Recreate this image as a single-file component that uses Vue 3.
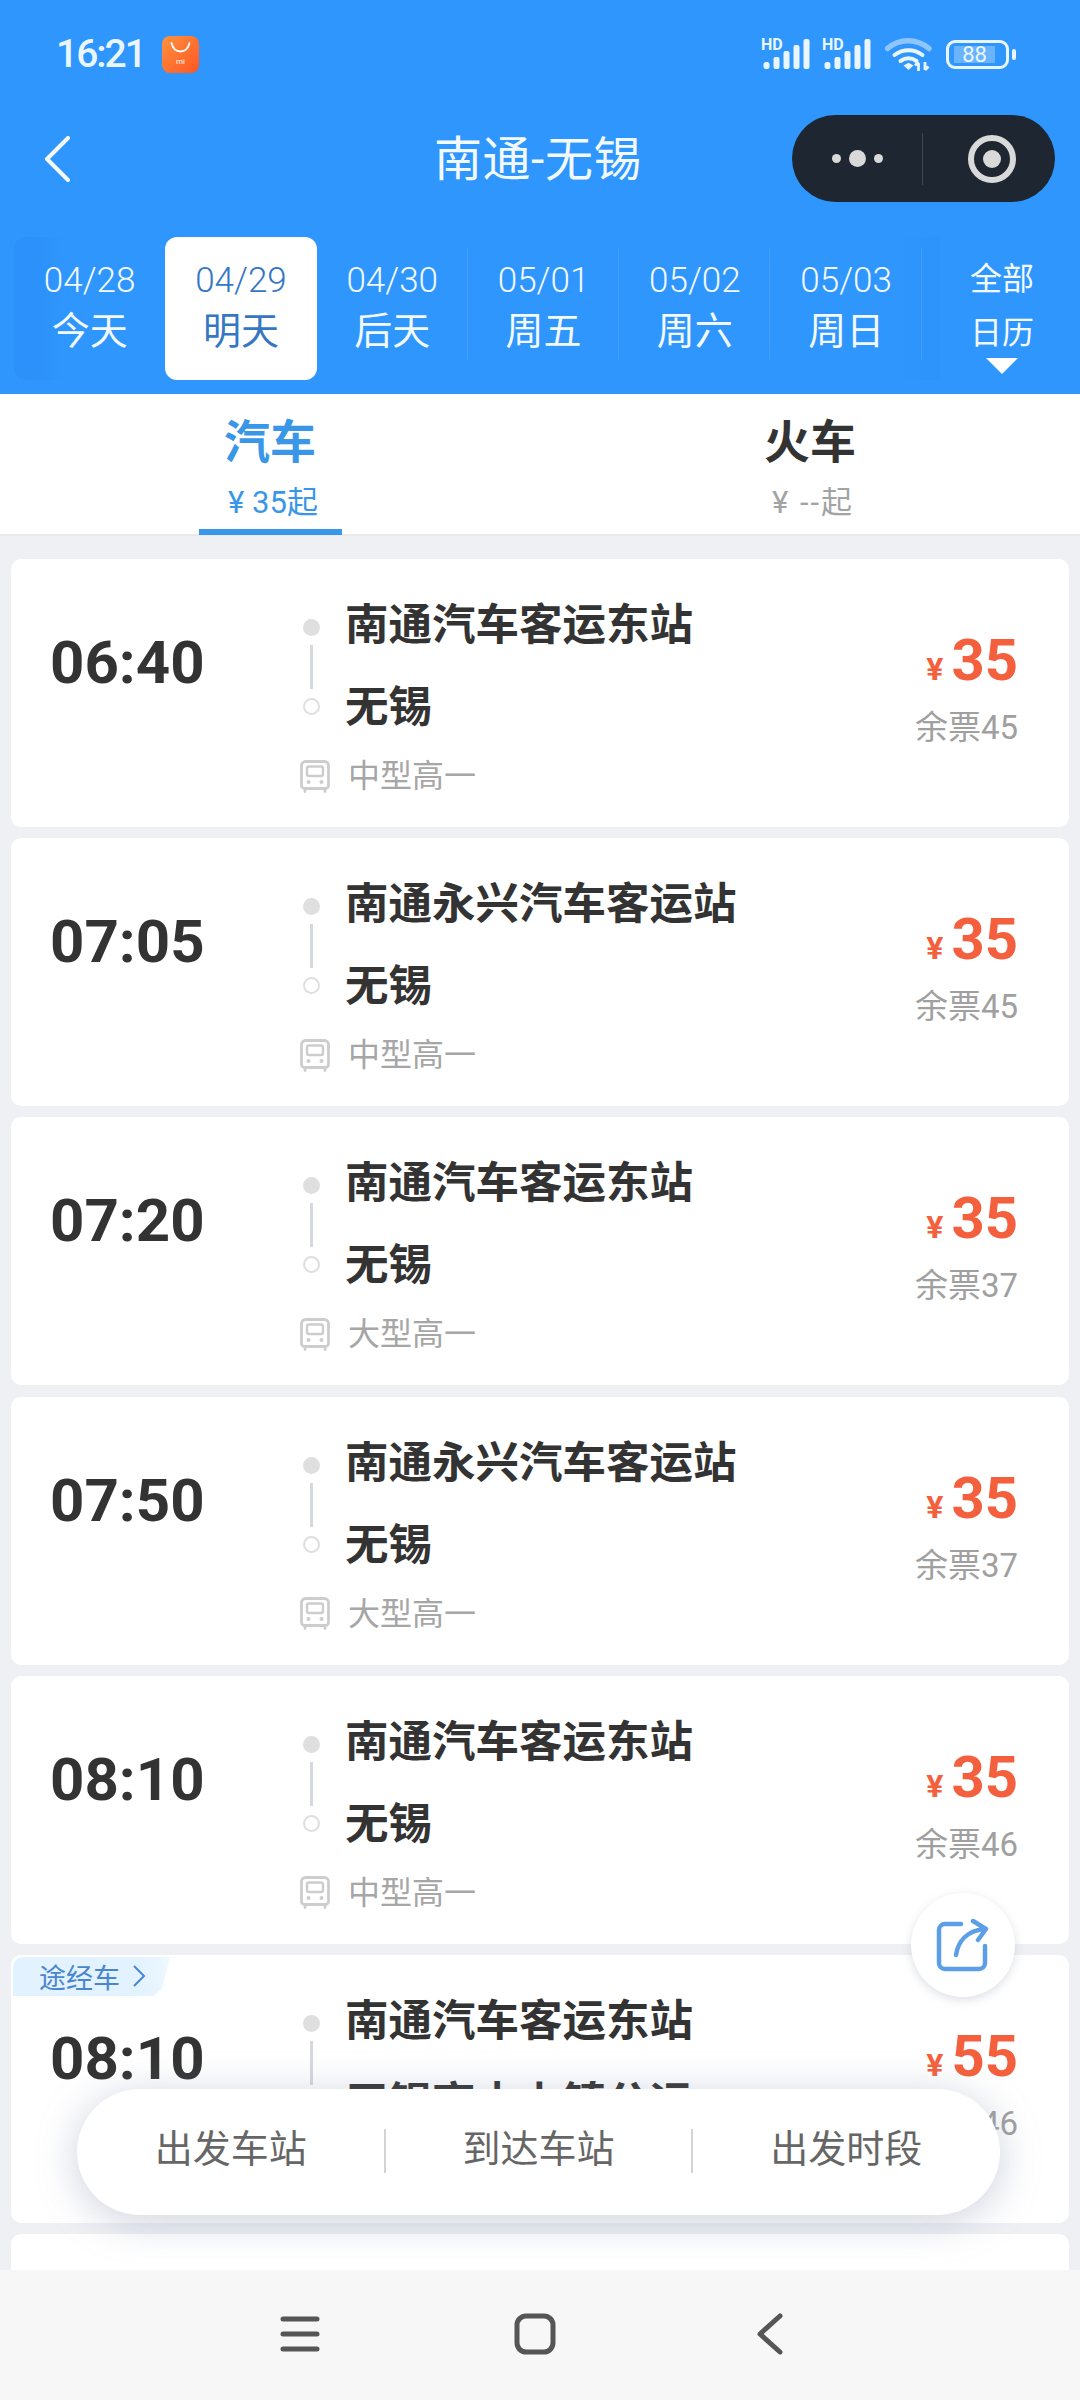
<template>
  <div class="page">
    <header class="header">
      <div class="status-bar">
        <div class="status-left">
          <span class="clock">16:21</span>
          <svg class="app-icon" width="37" height="37" viewBox="0 0 37 37">
            <defs>
              <linearGradient id="appGrad" x1="0" y1="0" x2="1" y2="1">
                <stop offset="0" stop-color="#fd9340" />
                <stop offset="1" stop-color="#ff5522" />
              </linearGradient>
            </defs>
            <rect width="37" height="37" rx="8" fill="url(#appGrad)" />
            <path d="M9.500 7c1.500 6 5 8.500 9 8.500s7.500-2.500 9-8.500" fill="none" stroke="#fff" stroke-width="1.800" stroke-linecap="round" />
            <text x="18.500" y="28" text-anchor="middle" font-size="8" fill="#fff" font-family="Roboto, sans-serif">mi</text>
          </svg>
        </div>
        <div class="status-right">
          <svg v-for="n in 2" :key="n" class="signal" width="50" height="38" viewBox="0 0 50 38">
            <text x="0" y="18" font-size="16" font-weight="700" fill="#eaf6ff" font-family="Roboto, sans-serif">HD</text>
            <rect x="2.500" y="30" width="6" height="7" rx="2.500" fill="#eaf6ff" />
            <rect x="12.500" y="25" width="6" height="12" rx="2" fill="#eaf6ff" />
            <rect x="22.500" y="19" width="6" height="18" rx="2" fill="#eaf6ff" />
            <rect x="32.500" y="13" width="6" height="24" rx="2" fill="#eaf6ff" />
            <rect x="42.500" y="7" width="6" height="30" rx="2" fill="#eaf6ff" />
          </svg>
          <svg class="wifi" width="47" height="35" viewBox="0 0 47 35">
            <path d="M2.500 11.500C14 1 32 1 44 11.500" fill="none" stroke="#8ec5fd" stroke-width="5.500" stroke-linecap="round" />
            <path d="M9.500 18c8.500-6.500 19.500-6.500 28 0" fill="none" stroke="#eaf6ff" stroke-width="4" stroke-linecap="round" />
            <path d="M15.500 24c5-3.500 11-3.500 16 0" fill="none" stroke="#eaf6ff" stroke-width="4" stroke-linecap="round" />
            <path d="M18.500 28.500l5-2.800 5 2.800-5 4.500z" fill="#eaf6ff" />
            <path d="M33.500 34v-8M30 28.500l3.500-3.500M40 25v8M40 33l3.500-3.500" fill="none" stroke="#eaf6ff" stroke-width="2.800" />
          </svg>
          <div class="battery">
            <div class="battery-body">
              <div class="battery-fill">88</div>
            </div>
            <span class="battery-nub"></span>
          </div>
        </div>
      </div>

      <div class="nav-bar">
        <svg class="back" width="28" height="46" viewBox="0 0 28 46">
          <path d="M25 2L4 23l21 21" fill="none" stroke="#f2f9ff" stroke-width="4" stroke-linecap="round" stroke-linejoin="round" />
        </svg>
        <div class="title">南通-无锡</div>
        <div class="capsule">
          <div class="capsule-dots">
            <i class="dot-sm"></i>
            <i class="dot-lg"></i>
            <i class="dot-sm"></i>
          </div>
          <div class="capsule-target"><i></i></div>
        </div>
      </div>

      <div class="date-strip">
        <div
          v-for="(d, i) in dates"
          :key="d.date"
          class="date-cell"
          :class="{ active: i === 1, first: i === 0, divided: i >= 2 }"
        >
          <span class="date-num">{{ d.date }}</span>
          <span class="date-day">{{ d.day }}</span>
        </div>
        <div class="date-all">
          <span>全部</span>
          <span class="date-all-second">日历</span>
          <i class="triangle"></i>
        </div>
      </div>
    </header>

    <div class="tabs">
      <div class="tab active">
        <div class="tab-name">汽车</div>
        <div class="tab-sub">¥ 35起</div>
      </div>
      <div class="tab">
        <div class="tab-name">火车</div>
        <div class="tab-sub">¥ --起</div>
      </div>
    </div>

    <div class="list">
      <div v-for="(t, i) in trips" :key="i" class="card">
        <div v-if="t.via" class="via-tag">
          <span>途经车</span>
          <svg width="14" height="24" viewBox="0 0 14 24">
            <path d="M2 2l10 10-10 10" fill="none" stroke="#4a86d0" stroke-width="2" />
          </svg>
        </div>
        <div class="time">{{ t.time }}</div>
        <div class="route">
          <div class="stops">
            <div class="track">
              <i class="track-start"></i>
              <i class="track-line"></i>
              <i class="track-end"></i>
            </div>
            <div class="stations">
              <div class="station">{{ t.from }}</div>
              <div class="station">{{ t.to }}</div>
            </div>
          </div>
          <div class="bus">
            <svg width="30" height="33" viewBox="0 0 30 33">
              <path d="M5.500 1.500h19a4 4 0 0 1 4 4v20a3 3 0 0 1-3 3h-21a3 3 0 0 1-3-3v-20a4 4 0 0 1 4-4z" fill="none" stroke="#cdcdcd" stroke-width="2.800" />
              <rect x="7" y="6.500" width="16" height="9.500" rx="2" fill="none" stroke="#cdcdcd" stroke-width="2.400" />
              <circle cx="8.500" cy="22" r="2" fill="#cdcdcd" />
              <circle cx="21.500" cy="22" r="2" fill="#cdcdcd" />
              <path d="M5 28.500v3M25 28.500v3" stroke="#cdcdcd" stroke-width="2.800" stroke-linecap="round" />
            </svg>
            <span class="bus-type">{{ t.bus }}</span>
          </div>
        </div>
        <div class="price-col">
          <div class="price"><span class="yen">¥</span>{{ t.price }}</div>
          <div class="left-tickets">余票{{ t.left }}</div>
        </div>
      </div>
      <div class="card"></div>
    </div>

    <div class="share">
      <svg width="54" height="54" viewBox="0 0 54 54">
        <path d="M25 6H9a6 6 0 0 0-6 6v33a6 6 0 0 0 6 6h34a6 6 0 0 0 6-6V28" fill="none" stroke="#5d9fe6" stroke-width="4.500" stroke-linecap="round" />
        <path d="M20 37c2-14 11-24 28-26" fill="none" stroke="#5d9fe6" stroke-width="4.500" stroke-linecap="round" />
        <path d="M37 3l13 8-8 11" fill="none" stroke="#5d9fe6" stroke-width="4.500" stroke-linecap="round" stroke-linejoin="round" />
      </svg>
    </div>

    <div class="filter">
      <div class="filter-item">出发车站</div>
      <div class="filter-item">到达车站</div>
      <div class="filter-item">出发时段</div>
    </div>

    <div class="system-bar">
      <svg width="40" height="38" viewBox="0 0 40 38">
        <path d="M3 4h34M3 19h34M3 34h34" stroke="#555" stroke-width="5" stroke-linecap="round" />
      </svg>
      <svg width="42" height="42" viewBox="0 0 42 42">
        <rect x="3" y="3" width="36" height="36" rx="9" fill="none" stroke="#555" stroke-width="5" />
      </svg>
      <svg width="26" height="42" viewBox="0 0 26 42">
        <path d="M23 3L3 21l20 18" fill="none" stroke="#555" stroke-width="5" stroke-linecap="round" stroke-linejoin="round" />
      </svg>
    </div>
  </div>
</template>

<script setup>
const dates = [
  { date: '04/28', day: '今天' },
  { date: '04/29', day: '明天' },
  { date: '04/30', day: '后天' },
  { date: '05/01', day: '周五' },
  { date: '05/02', day: '周六' },
  { date: '05/03', day: '周日' }
]

const trips = [
  { time: '06:40', from: '南通汽车客运东站', to: '无锡', bus: '中型高一', price: 35, left: 45 },
  { time: '07:05', from: '南通永兴汽车客运站', to: '无锡', bus: '中型高一', price: 35, left: 45 },
  { time: '07:20', from: '南通汽车客运东站', to: '无锡', bus: '大型高一', price: 35, left: 37 },
  { time: '07:50', from: '南通永兴汽车客运站', to: '无锡', bus: '大型高一', price: 35, left: 37 },
  { time: '08:10', from: '南通汽车客运东站', to: '无锡', bus: '中型高一', price: 35, left: 46 },
  { time: '08:10', from: '南通汽车客运东站', to: '无锡高中上镇公运', bus: '中型高一', price: 55, left: 46, via: true }
]
</script>

<style>
body {
  margin: 0;
}
</style>

<style scoped>
.page {
  position: relative;
  width: 1080px;
  height: 2400px;
  display: flex;
  flex-direction: column;
  overflow: hidden;
  background: #eff0f4;
  font-family: Roboto, "Noto Sans CJK SC", sans-serif;
  color: #333;
}

.header {
  height: 394px;
  flex: none;
  background: #2e96fd;
  color: #f2f9ff;
}

.status-bar {
  height: 114px;
  box-sizing: border-box;
  padding: 0 64px 0 56px;
  display: flex;
  justify-content: space-between;
}

.status-left {
  display: flex;
  align-items: center;
  height: 108px;
  gap: 17px;
}

.clock {
  font-size: 39px;
  font-weight: 500;
  letter-spacing: -2px;
  color: #eaf6ff;
}

.status-right {
  height: 108px;
  display: flex;
  align-items: center;
  gap: 11px;
}

.signal {
  margin-bottom: 6px;
}

.wifi {
  margin-left: 2px;
}

.battery {
  display: flex;
  align-items: center;
  gap: 3px;
  margin-left: 3px;
}

.battery-body {
  width: 63px;
  height: 29px;
  box-sizing: border-box;
  border: 3px solid #eaf6ff;
  border-radius: 9px;
  padding: 3px 11px 3px 5px;
}

.battery-fill {
  height: 100%;
  background: #6ab4fe;
  font-size: 22px;
  line-height: 17px;
  text-align: center;
  color: #eaf6ff;
}

.battery-nub {
  width: 4px;
  height: 11px;
  border-radius: 2px;
  background: #eaf6ff;
}

.nav-bar {
  height: 87px;
  padding: 0 25px;
  display: grid;
  grid-template-columns: 1fr auto 1fr;
  align-items: center;
}

.back {
  margin-left: 18px;
}

.title {
  font-size: 48px;
  line-height: 87px;
  margin: 2px 4px 0 0;
  letter-spacing: 0.500px;
}

.capsule {
  justify-self: end;
  width: 263px;
  height: 87px;
  border-radius: 44px;
  background: #1e2631;
  display: flex;
  align-items: center;
}

.capsule-dots {
  width: 131px;
  height: 52px;
  box-sizing: border-box;
  border-right: 1px solid #3d4550;
  display: flex;
  align-items: center;
  justify-content: center;
  gap: 8px;
  padding-left: 1px;
}

.dot-sm {
  width: 9px;
  height: 9px;
  border-radius: 50%;
  background: #d9d9d9;
}

.dot-lg {
  width: 17px;
  height: 17px;
  border-radius: 50%;
  background: #d9d9d9;
}

.capsule-target {
  width: 48px;
  height: 48px;
  box-sizing: border-box;
  margin-left: 45px;
  border: 6px solid #d9d9d9;
  border-radius: 50%;
  display: flex;
  align-items: center;
  justify-content: center;
}

.capsule-target i {
  width: 18px;
  height: 18px;
  border-radius: 50%;
  background: #d9d9d9;
}

.date-strip {
  margin-top: 36px;
  height: 143px;
  padding-left: 14px;
  display: flex;
  background: linear-gradient(90deg, #2e96fd, #2c93fb) 895px 0 / 45px 100% no-repeat;
}

.date-cell {
  position: relative;
  width: 151.300px;
  flex: none;
  display: flex;
  flex-direction: column;
  align-items: center;
  box-sizing: border-box;
  padding-top: 22px;
}

.date-cell.first {
  border-radius: 12px 0 0 12px;
  background: linear-gradient(90deg, #2c91fa 20px, #2e96fd 50px);
}

.date-cell.active {
  background: #fff;
  border-radius: 12px;
  color: #3577c4;
}

.date-cell.divided::after {
  content: "";
  position: absolute;
  right: 0;
  top: 11px;
  height: 112px;
  width: 1px;
  background: #429ffc;
}

.date-num {
  font-size: 35px;
  line-height: 44px;
  font-weight: 300;
}

.date-day {
  font-size: 38px;
  line-height: 50px;
  margin-top: 3px;
}

.date-all {
  flex: 1;
  display: flex;
  flex-direction: column;
  align-items: center;
  font-size: 32px;
  line-height: 44px;
  padding-top: 20px;
  padding-left: 2px;
}

.date-all-second {
  margin-top: 10px;
}

.triangle {
  margin-top: 3px;
  width: 0;
  height: 0;
  border-left: 16px solid transparent;
  border-right: 16px solid transparent;
  border-top: 16px solid #fff;
}

.tabs {
  height: 142px;
  flex: none;
  box-sizing: border-box;
  display: flex;
  background: #fff;
  border-bottom: 2px solid #e9e9ec;
}

.tab {
  position: relative;
  flex: 1;
  box-sizing: border-box;
  display: flex;
  flex-direction: column;
  align-items: center;
  padding-top: 23px;
}

.tab:first-child {
  flex: none;
  width: 540px;
}

.tab-name {
  font-size: 46px;
  line-height: 50px;
  font-weight: 700;
}

.tab-sub {
  margin-top: 16px;
  padding-left: 6px;
  font-size: 31px;
  line-height: 40px;
  letter-spacing: 2px;
  color: #a3a3a3;
}

.tab.active .tab-name,
.tab.active .tab-sub {
  color: #3a97e8;
}

.tab.active .tab-sub {
  letter-spacing: 0;
}

.tab.active::after {
  content: "";
  position: absolute;
  left: 199px;
  top: 135px;
  width: 143px;
  height: 6px;
  background: #3a97e8;
}

.list {
  flex: 1;
  min-height: 0;
  overflow: hidden;
  padding: 23px 11px 0;
  display: flex;
  flex-direction: column;
  gap: 11.200px;
}

.card {
  position: relative;
  flex: none;
  height: 268px;
  border-radius: 10px;
  background: #fff;
  display: flex;
}

.via-tag {
  position: absolute;
  left: 2px;
  top: 2px;
  width: 157px;
  height: 39px;
  box-sizing: border-box;
  padding-left: 26px;
  display: flex;
  align-items: center;
  gap: 12px;
  font-size: 27px;
  color: #4a86d0;
  border-radius: 10px 0 12px 0;
  background: linear-gradient(90deg, #e2f2fe 80%, #eef8ff);
  clip-path: polygon(0 0, 100% 0, 95% 80%, 90% 100%, 0 100%);
}

.time {
  width: 249px;
  margin-left: 39px;
  padding-top: 69px;
  font-size: 60px;
  line-height: 70px;
  font-weight: 700;
}

.route {
  padding-top: 45px;
}

.stops {
  display: flex;
}

.track {
  width: 24px;
  margin-right: 22px;
  padding-top: 15px;
  display: flex;
  flex-direction: column;
  align-items: center;
}

.track-start {
  width: 17px;
  height: 17px;
  border-radius: 50%;
  background: #dfdfdf;
}

.track-line {
  width: 3px;
  height: 44px;
  margin: 9px 0;
  background: #d5d8dd;
}

.track-end {
  width: 17px;
  height: 17px;
  box-sizing: border-box;
  border: 2px solid #dfdfdf;
  border-radius: 50%;
}

.station {
  font-size: 43.500px;
  line-height: 44px;
  font-weight: 700;
  white-space: nowrap;
}

.station + .station {
  margin-top: 38px;
}

.bus {
  margin: 24px 0 0 1px;
  display: flex;
  align-items: center;
  gap: 18px;
  height: 44px;
}

.bus-type {
  font-size: 32px;
  line-height: 44px;
  color: #a6a6a6;
}

.price-col {
  margin-left: auto;
  padding: 71px 51px 0 0;
  display: flex;
  flex-direction: column;
  align-items: flex-end;
}

.price {
  font-size: 58px;
  line-height: 60px;
  font-weight: 700;
  color: #f4603d;
}

.yen {
  font-size: 32px;
  margin-right: 8px;
}

.left-tickets {
  margin-top: 9px;
  font-size: 33px;
  line-height: 40px;
  color: #a0a0a0;
}

.share {
  position: absolute;
  left: 911px;
  top: 1893px;
  width: 104px;
  height: 104px;
  border-radius: 50%;
  background: #fff;
  box-shadow: 0 3px 10px rgba(120, 130, 150, 0.25);
  display: flex;
  align-items: center;
  justify-content: center;
  z-index: 2;
}

.filter {
  position: absolute;
  left: 77px;
  top: 2089px;
  width: 923px;
  height: 126px;
  border-radius: 63px;
  background: #fff;
  box-shadow: 0 6px 40px rgba(130, 140, 170, 0.4);
  display: flex;
  align-items: center;
  z-index: 2;
}

.filter-item {
  position: relative;
  flex: 1;
  text-align: center;
  font-size: 38px;
  line-height: 46px;
  color: #666;
  margin-top: -6px;
}

.filter-item + .filter-item::before {
  content: "";
  position: absolute;
  left: -1px;
  top: 3px;
  width: 2px;
  height: 44px;
  background: #d4d4d4;
}

.system-bar {
  position: relative;
  z-index: 3;
  height: 130px;
  flex: none;
  background: #f7f7f7;
  display: grid;
  grid-template-columns: repeat(3, 235px);
  justify-content: center;
  justify-items: center;
  align-items: center;
  padding: 0 10px 2px 0;
  box-sizing: border-box;
}
</style>
